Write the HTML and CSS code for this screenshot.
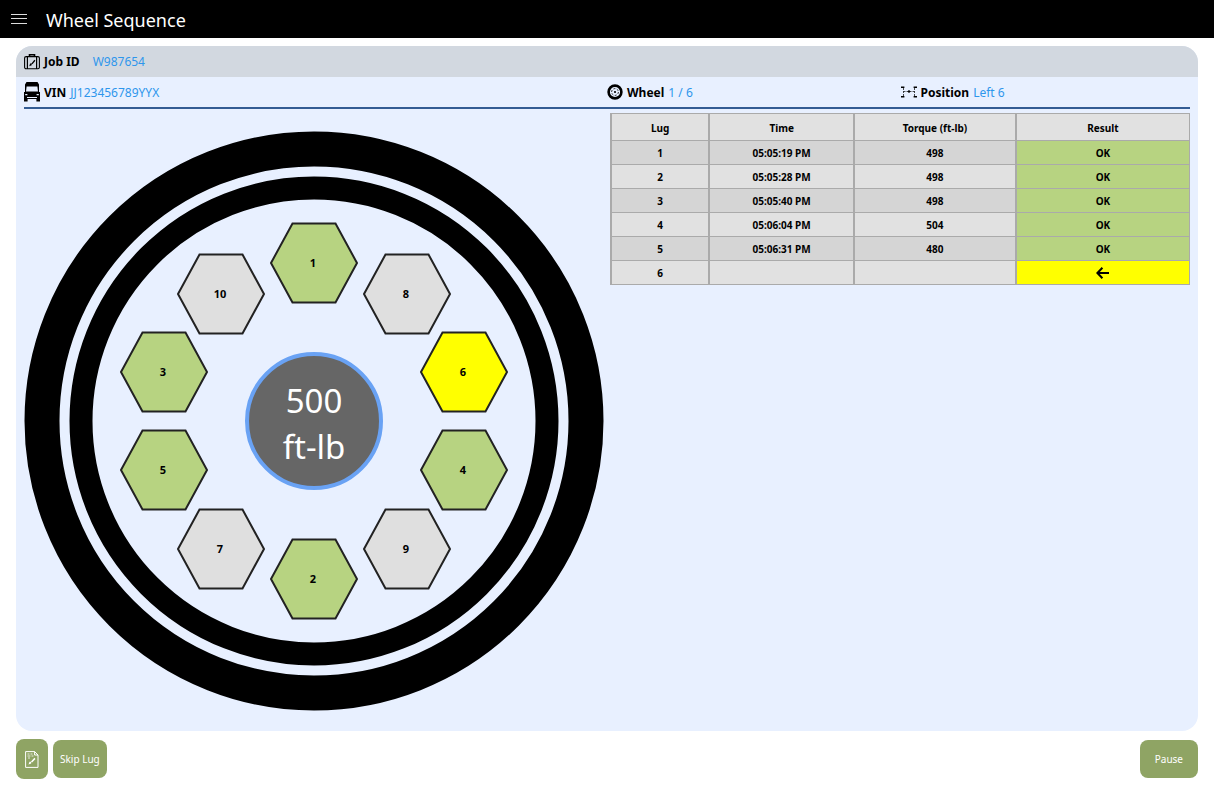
FILE: index.html
```html
<!DOCTYPE html>
<html lang="en">
<head>
  <meta charset="UTF-8">
  <meta name="viewport" content="width=device-width, initial-scale=1">
  <title>Wheel Sequence</title>
  <link rel="stylesheet" href="styles.css">
</head>
<body>
<header class="topbar">
  <button class="menu" type="button" aria-label="Menu">
    <svg width="16" height="10" viewBox="0 0 16 10"><path d="M0 .5h16M0 4.5h16M0 9.5h16" stroke="#ddd" fill="none"/></svg>
  </button>
  <h1>Wheel Sequence</h1>
</header>

<main class="panel">
  <div class="job">
    <svg class="icon" width="16" height="16" viewBox="0 0 16 16" fill="none" stroke="#000">
      <rect x=".6" y="2.6" width="14.8" height="12.2" rx="1.5" stroke-width="1.1"/>
      <path d="M3.4 2.6V15M12.6 2.6V15" stroke-width="1.2"/>
      <path d="M5.5 2.6V.8h5v1.8" stroke-width="1.6"/>
      <path d="M5.3 12.2l.8-2.6h1.6v1.6zM7.4 9.4l3-3.6 1 .9-3 3.6z" fill="#000" stroke="none"/>
    </svg>
    <b>Job ID</b>
    <span class="value job-value">W987654</span>
  </div>

  <div class="info">
    <div class="field">
      <svg class="icon" width="16" height="20" viewBox="0 0 16 20">
        <path d="M2.5 0h11L15 2.5v7.5h1v9.5h-3.6V17H3.6v2.5H0V10h1V2.5z"/>
        <path d="M2.6 4.5h10.8l.6 5H2zM3 15h10v1H3zM1.2 12h2.2v1.2H1.2zM12.6 12h2.2v1.2h-2.2z" fill="#e8f0ff"/>
      </svg>
      <b>VIN</b>
      <span class="value">JJ123456789YYX</span>
    </div>
    <div class="field">
      <svg class="icon" width="16" height="16" viewBox="0 0 16 16" fill="none" stroke="#000">
        <circle cx="8" cy="8" r="6.4" stroke-width="2.6"/>
        <circle cx="8" cy="8" r="3.4" stroke-width=".8" stroke-dasharray="2 1.5"/>
        <circle cx="8" cy="8" r="1.1" fill="#000" stroke="none"/>
      </svg>
      <b>Wheel</b>
      <span class="value">1 / 6</span>
    </div>
    <div class="field field-position">
      <svg class="icon" width="16" height="12" viewBox="0 0 16 12" fill="none" stroke="#000">
        <path d="M0 1.2h3.4M0 10.8h3.4M12.6 1.2H16M12.6 10.8H16" stroke-width="1.6"/>
        <path d="M2.5 2v8M13.5 2v8M2.5 5.5h11" stroke-width=".7" stroke-dasharray="2 1"/>
        <circle cx="8" cy="5.5" r="1.2" fill="#000" stroke="none"/>
      </svg>
      <b>Position</b>
      <span class="value">Left 6</span>
    </div>
  </div>

  <div class="content">
    <svg class="wheel" viewBox="0 0 580 580" role="img" aria-label="Wheel lug pattern">
      <defs>
        <path id="hex" d="M-43 0l21.5-39.5h43L43 0 21.5 39.5h-43z"/>
      </defs>
      <circle class="tire" cx="290" cy="290" r="272" stroke-width="35"/>
      <circle class="tire" cx="290" cy="290" r="233" stroke-width="23"/>

      <g class="lug ok" transform="translate(290 132)"><use href="#hex"/><text x="-1" y="4">1</text></g>
      <g class="lug" transform="translate(383 163)"><use href="#hex"/><text x="-1" y="4">8</text></g>
      <g class="lug current" transform="translate(440 241)"><use href="#hex"/><text x="-1" y="4">6</text></g>
      <g class="lug ok" transform="translate(440 339)"><use href="#hex"/><text x="-1" y="4">4</text></g>
      <g class="lug" transform="translate(383 418)"><use href="#hex"/><text x="-1" y="4">9</text></g>
      <g class="lug ok" transform="translate(290 448)"><use href="#hex"/><text x="-1" y="4">2</text></g>
      <g class="lug" transform="translate(197 418)"><use href="#hex"/><text x="-1" y="4">7</text></g>
      <g class="lug ok" transform="translate(140 339)"><use href="#hex"/><text x="-1" y="4">5</text></g>
      <g class="lug ok" transform="translate(140 241)"><use href="#hex"/><text x="-1" y="4">3</text></g>
      <g class="lug" transform="translate(197 163)"><use href="#hex"/><text x="-1" y="4">10</text></g>

      <circle class="hub" cx="290" cy="290" r="67"/>
      <text class="target" x="290" y="282">500</text>
      <text class="target" x="290" y="328">ft-lb</text>
    </svg>

    <table class="results">
      <colgroup>
        <col class="col-lug"><col class="col-time"><col class="col-torque"><col class="col-result">
      </colgroup>
      <thead>
        <tr><th>Lug</th><th>Time</th><th>Torque (ft-lb)</th><th>Result</th></tr>
      </thead>
      <tbody>
        <tr><td>1</td><td>05:05:19 PM</td><td>498</td><td class="ok">OK</td></tr>
        <tr><td>2</td><td>05:05:28 PM</td><td>498</td><td class="ok">OK</td></tr>
        <tr><td>3</td><td>05:05:40 PM</td><td>498</td><td class="ok">OK</td></tr>
        <tr><td>4</td><td>05:06:04 PM</td><td>504</td><td class="ok">OK</td></tr>
        <tr><td>5</td><td>05:06:31 PM</td><td>480</td><td class="ok">OK</td></tr>
        <tr>
          <td>6</td><td></td><td></td>
          <td class="current">
            <svg class="arrow" width="13" height="12" viewBox="0 0 13 12" fill="none" stroke="#000" stroke-width="2" role="img" aria-label="Current lug"><path d="M13 6H1.5M6.4 .8L1.4 6l5 5.2"/></svg>
          </td>
        </tr>
      </tbody>
    </table>
  </div>
</main>

<footer class="actions">
  <button class="btn btn-note" type="button" aria-label="Job notes">
    <svg width="14" height="17" viewBox="0 0 14 17" fill="none" stroke="#fff">
      <path d="M.6.6h9l3.4 3.4v12.4H.6zM9.6.6V4H13"/>
      <path d="M2.5 3h2M5.5 3h2M2.5 5h3M6.5 5h2M3 7h2" stroke-width=".8"/>
      <path d="M3.5 13.5l1-2.7h1.7v1.7zM6 10.4l3.4-3.6 1.1 1.1-3.4 3.6z" fill="#fff" stroke="none"/>
    </svg>
  </button>
  <button class="btn" type="button">Skip Lug</button>
  <button class="btn btn-pause" type="button">Pause</button>
</footer>
</body>
</html>
```
FILE: styles.css
```css
* {
  box-sizing: border-box;
  margin: 0;
  padding: 0;
}

body {
  min-height: 100vh;
  display: flex;
  flex-direction: column;
  background: #fff;
  color: #000;
  font-family: "Noto Sans", "Open Sans", sans-serif;
  font-size: 12px;
}

button {
  border: 0;
  font: inherit;
  cursor: pointer;
}

svg {
  display: block;
}

/* top bar */
.topbar {
  display: flex;
  align-items: center;
  padding: 0 11px;
  gap: 19px;
  background: #000;
  color: #fff;
}

.topbar h1 {
  padding-top: 2px;
  font-size: 18px;
  font-weight: 400;
  line-height: 36px;
}

.menu {
  background: none;
}

/* main panel */
.panel {
  flex: 1;
  display: flex;
  flex-direction: column;
  margin: 8px 16px 0;
  border-radius: 16px;
  background: #e8f0ff;
  overflow: hidden;
}

.job,
.field {
  display: flex;
  align-items: center;
  gap: 4px;
}

.job {
  height: 31px;
  padding: 0 8px;
  background: #d2d8e0;
}

.job-value {
  margin-left: 9px;
}

.info {
  height: 32px;
  display: grid;
  grid-template-columns: 2fr 1fr 1fr;
  margin: 0 8px;
  border-bottom: 2px solid #335c93;
}

.field-position {
  padding-left: 2px;
}

.value {
  color: #2e96ec;
}

.content {
  flex: 1;
  display: grid;
  grid-template-columns: 1fr 1fr;
  gap: 6px;
  padding: 2px 8px 0;
}

/* wheel */
.wheel {
  width: 100%;
  align-self: center;
}

.tire {
  fill: none;
  stroke: #000;
}

.lug {
  fill: #dfdfdf;
}

.lug.ok {
  fill: #b7d381;
}

.lug.current {
  fill: #ff0;
}

.lug use {
  stroke: #222;
  stroke-width: 2;
}

.lug text {
  fill: #000;
  font-size: 11px;
  font-weight: 700;
  text-anchor: middle;
}

.hub {
  fill: #666;
  stroke: #69a2f4;
  stroke-width: 4;
}

.target {
  fill: #fff;
  font-size: 33px;
  text-anchor: middle;
}

/* results table */
.results {
  width: 100%;
  align-self: start;
  margin-top: 2px;
  table-layout: fixed;
  border-collapse: collapse;
  font-size: 10px;
  font-weight: 700;
  text-align: center;
}

.col-lug {
  width: 17%;
}

.col-time {
  width: 25%;
}

.col-torque {
  width: 28%;
}

.col-result {
  width: 30%;
}

.results th,
.results td {
  height: 24px;
  border: 1px solid #aaa;
  border-width: 1px 2px;
  background: #e1e1e1;
}

.results th {
  height: 27px;
  padding-top: 1px;
}

.results th:last-child,
.results td:last-child {
  border-right-width: 1px;
}

.results tbody tr:nth-child(odd) td {
  background: #d5d5d5;
}

.results tbody tr td.ok {
  background: #b7d381;
}

.results tbody tr:nth-child(odd) td.ok {
  background: #b7d381;
}

.results tbody tr td.current {
  background: #ff0;
}

.arrow {
  margin: 0 auto;
}

/* bottom buttons */
.actions {
  display: flex;
  align-items: center;
  gap: 5px;
  padding: 8px 16px;
}

.btn {
  height: 38px;
  padding: 0 7px;
  border-radius: 8px;
  background: #8fa464;
  color: #fff;
  font-size: 10px;
}

.btn-note {
  height: 40px;
  padding: 0 9px;
}

.btn-pause {
  margin-left: auto;
  padding: 0 15px;
}
```
